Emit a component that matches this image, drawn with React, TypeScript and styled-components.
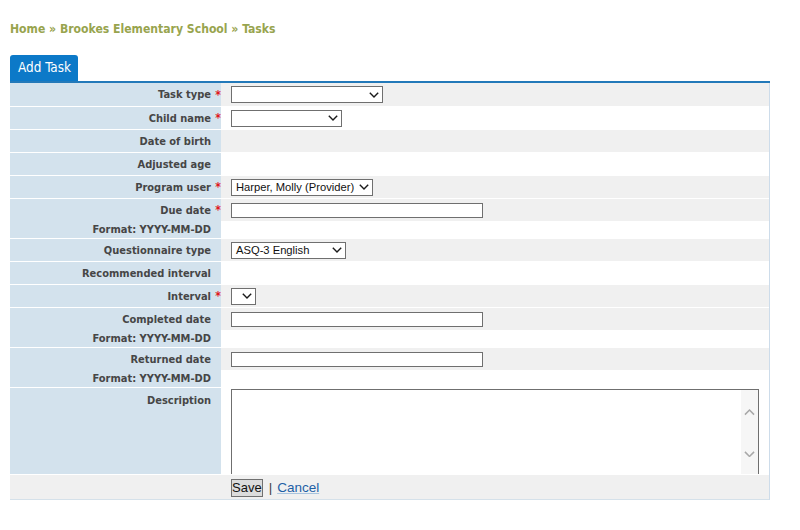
import React from "react";
import styled, { createGlobalStyle } from "styled-components";

const Global = createGlobalStyle`
  html, body { margin: 0; padding: 0; background: #ffffff; }
  body { font-family: "DejaVu Sans Condensed", "DejaVu Sans", sans-serif; }
`;

const Page = styled.div`
  width: 760px;
  padding: 21px 10px 0 10px;
`;

const Breadcrumb = styled.div`
  font-family: "DejaVu Sans Condensed", "DejaVu Sans", sans-serif;
  font-weight: bold;
  font-size: 12.1px;
  line-height: 16px;
  color: #98a44e;
  height: 16px;
  margin-bottom: 18px;
`;

const TabBar = styled.div`
  display: flex;
  border-bottom: 2px solid #2379b9;
`;

const Tab = styled.div`
  background: #0c79c8;
  color: #ffffff;
  font-size: 13.4px;
  line-height: 26px;
  height: 26px;
  padding: 0 7px 0 8px;
  border-radius: 3px 3px 0 0;
`;

const Form = styled.div`
  border-right: 1px solid #cddcea;
  border-bottom: 1px solid #d5e1ea;
  display: flex;
  flex-direction: column;
`;

const Record = styled.div<{ $first?: boolean }>`
  display: grid;
  grid-template-columns: 211px 1fr;
  border-top: ${(p) => (p.$first ? "0" : "1px solid #ffffff")};
`;

const LabelCell = styled.div`
  background: #d3e2ed;
  display: flex;
  flex-direction: column;
`;

const LabelLine = styled.div<{ $h: number; $top?: boolean }>`
  height: ${(p) => p.$h}px;
  box-sizing: border-box;
  padding-top: ${(p) => (p.$top ? "6px" : "0")};
  display: flex;
  align-items: ${(p) => (p.$top ? "flex-start" : "center")};
  justify-content: flex-end;
  font-weight: bold;
  font-size: 11px;
  color: #464646;
`;

const Star = styled.span`
  width: 10px;
  flex: none;
  text-align: right;
  color: #e0191b;
  font-size: 12px;
  line-height: 12px;
  box-sizing: border-box;
`;

const ValueCell = styled.div`
  display: flex;
  flex-direction: column;
`;

const ValueLine = styled.div<{ $h: number; $grey?: boolean; $top?: boolean }>`
  height: ${(p) => p.$h}px;
  background: ${(p) => (p.$grey ? "#f0f0f0" : "#ffffff")};
  display: flex;
  align-items: ${(p) => (p.$top ? "flex-start" : "center")};
  padding-left: 10px;
`;

const SelectBox = styled.div<{ $w: number }>`
  width: ${(p) => p.$w}px;
  height: 17px;
  box-sizing: border-box;
  border: 1px solid #6f6f6f;
  background: #ffffff;
  display: flex;
  align-items: center;
  justify-content: space-between;
  padding: 0 3px 0 4px;
  font-family: "Liberation Sans", Arial, sans-serif;
  font-size: 11.2px;
  color: #111;
  white-space: nowrap;
`;

const TextInput = styled.div`
  width: 252px;
  height: 15px;
  box-sizing: border-box;
  border: 1px solid #6f6f6f;
  background: #ffffff;
`;

const AreaBox = styled.div`
  margin-top: 1px;
  width: 528px;
  height: 86px;
  box-sizing: border-box;
  border: 1px solid #6f6f6f;
  background: #ffffff;
  display: flex;
`;

const AreaText = styled.textarea`
  flex: 1;
  border: 0;
  outline: none;
  resize: none;
  background: transparent;
  font-family: "Liberation Sans", Arial, sans-serif;
  font-size: 12px;
`;

const ScrollTrack = styled.div`
  width: 17px;
  background: #f6f6f6;
  display: flex;
  flex-direction: column;
  justify-content: space-between;
  align-items: center;
  padding: 19px 0 17px;
`;

const SaveRow = styled.div`
  border-top: 1px solid #ffffff;
  background: #f0f0f0;
  height: 24px;
  display: flex;
  align-items: center;
  padding-left: 211px;
  font-family: "Liberation Sans", Arial, sans-serif;
  font-size: 13.5px;
  color: #333;
`;

const SaveButton = styled.button`
  font-family: "Liberation Sans", Arial, sans-serif;
  font-size: 13px;
  color: #111;
  background: #dcdcdc;
  border: 1px solid #707070;
  height: 18px;
  padding: 0;
  margin: 1px 0 0 10px;
  line-height: 16px;
`;

const Pipe = styled.span`
  margin: 0 5px 0 6px;
  color: #444;
`;

const CancelLink = styled.a`
  color: #1d5fa6;
  text-decoration: underline;
  text-decoration-color: #a9c4de;
  cursor: pointer;
`;

const Chevron = ({ color = "#1a1a1a", up = false, size = 10 }: { color?: string; up?: boolean; size?: number }) => (
  <svg width={size} height={size / 2 + 1} viewBox="0 0 10 6" style={{ flex: "none" }}>
    <polyline
      points={up ? "0.8,5.2 5,1 9.2,5.2" : "0.8,0.8 5,5 9.2,0.8"}
      fill="none"
      stroke={color}
      strokeWidth={1.4}
    />
  </svg>
);

const Select = ({ w, text }: { w: number; text?: string }) => (
  <SelectBox $w={w}>
    <span>{text || ""}</span>
    <Chevron />
  </SelectBox>
);

type Line = { label?: string; req?: boolean; grey?: boolean; h: number; control?: React.ReactNode };

const records: Line[][] = [
  [{ label: "Task type", req: true, grey: true, h: 23, control: <Select w={152} /> }],
  [{ label: "Child name", req: true, h: 22, control: <Select w={111} /> }],
  [{ label: "Date of birth", grey: true, h: 22 }],
  [{ label: "Adjusted age", h: 22 }],
  [{ label: "Program user", req: true, grey: true, h: 22, control: <Select w={142} text="Harper, Molly (Provider)" /> }],
  [
    { label: "Due date", req: true, grey: true, h: 22, control: <TextInput /> },
    { label: "Format: YYYY-MM-DD", h: 17 },
  ],
  [{ label: "Questionnaire type", grey: true, h: 22, control: <Select w={115} text="ASQ-3 English" /> }],
  [{ label: "Recommended interval", h: 22 }],
  [{ label: "Interval", req: true, grey: true, h: 22, control: <Select w={25} /> }],
  [
    { label: "Completed date", grey: true, h: 22, control: <TextInput /> },
    { label: "Format: YYYY-MM-DD", h: 17 },
  ],
  [
    { label: "Returned date", grey: true, h: 22, control: <TextInput /> },
    { label: "Format: YYYY-MM-DD", h: 17 },
  ],
];

export default function App() {
  return (
    <>
      <Global />
      <Page>
        <Breadcrumb>Home » Brookes Elementary School » Tasks</Breadcrumb>
        <TabBar>
          <Tab>Add Task</Tab>
        </TabBar>
        <Form>
          {records.map((lines, i) => (
            <Record key={i} $first={i === 0}>
              <LabelCell>
                {lines.map((l, j) => (
                  <LabelLine key={j} $h={l.h}>
                    {l.label}
                    <Star>{l.req ? "*" : ""}</Star>
                  </LabelLine>
                ))}
              </LabelCell>
              <ValueCell>
                {lines.map((l, j) => (
                  <ValueLine key={j} $h={l.h} $grey={l.grey}>
                    {l.control}
                  </ValueLine>
                ))}
              </ValueCell>
            </Record>
          ))}
          <Record>
            <LabelCell>
              <LabelLine $h={86} $top>
                Description
                <Star />
              </LabelLine>
            </LabelCell>
            <ValueCell>
              <ValueLine $h={86} $top>
                <AreaBox>
                  <AreaText />
                  <ScrollTrack>
                    <Chevron up color="#a8a8a8" size={11} />
                    <Chevron color="#a8a8a8" size={11} />
                  </ScrollTrack>
                </AreaBox>
              </ValueLine>
            </ValueCell>
          </Record>
          <SaveRow>
            <SaveButton>Save</SaveButton>
            <Pipe>|</Pipe>
            <CancelLink>Cancel</CancelLink>
          </SaveRow>
        </Form>
      </Page>
    </>
  );
}
